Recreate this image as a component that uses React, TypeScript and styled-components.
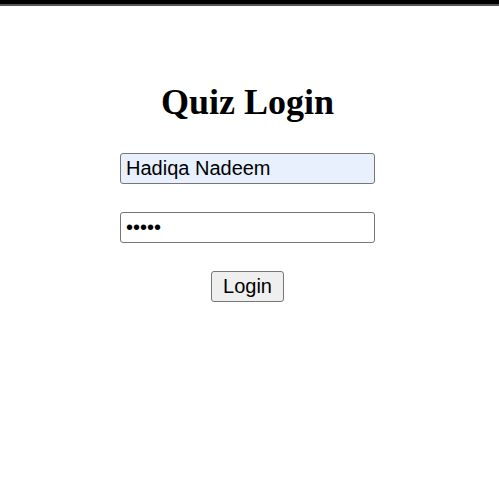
import styled, { createGlobalStyle } from 'styled-components';

const GlobalStyle = createGlobalStyle`
  body {
    margin: 0;
    background: #ffffff;
  }
`

const TopBar = styled.div`
  height: 4px;
  background-color: #000000;
  border-bottom: 2px solid #555555;
`

const LoginForm = styled.form`
  display: flex;
  flex-direction: column;
  align-items: center;
  gap: 28px;
  padding: 0 4px 0 0;
`

const Title = styled.h1`
  font-family: "Liberation Serif", "Times New Roman", serif;
  font-size: 36px;
  font-weight: bold;
  color: #000000;
  margin: 75px 0 2px;
`

const TextInput = styled.input<{ $filled?: boolean }>`
  box-sizing: border-box;
  width: 255px;
  height: 31px;
  padding: 0 5px;
  font-family: "Liberation Sans", Arial, sans-serif;
  font-size: 20px;
  color: #000000;
  background-color: ${p => (p.$filled ? '#e8f0fe' : '#ffffff')};
  border: 1px solid #767676;
  border-radius: 3px;
  outline: none;
`

const LoginButton = styled.button`
  box-sizing: border-box;
  width: 73px;
  height: 31px;
  padding: 0 6px;
  font-family: "Liberation Sans", Arial, sans-serif;
  font-size: 20px;
  color: #000000;
  background-color: #efefef;
  border: 1px solid #767676;
  border-radius: 3px;
  cursor: pointer;
`

function App() {
    return (
        <>
            <GlobalStyle />
            <TopBar />
            <LoginForm onSubmit={e => e.preventDefault()}>
                <Title>Quiz Login</Title>
                <TextInput type="text" defaultValue="Hadiqa Nadeem" $filled />
                <TextInput type="password" defaultValue="12345" />
                <LoginButton type="submit">Login</LoginButton>
            </LoginForm>
        </>
    )
}

export default App
